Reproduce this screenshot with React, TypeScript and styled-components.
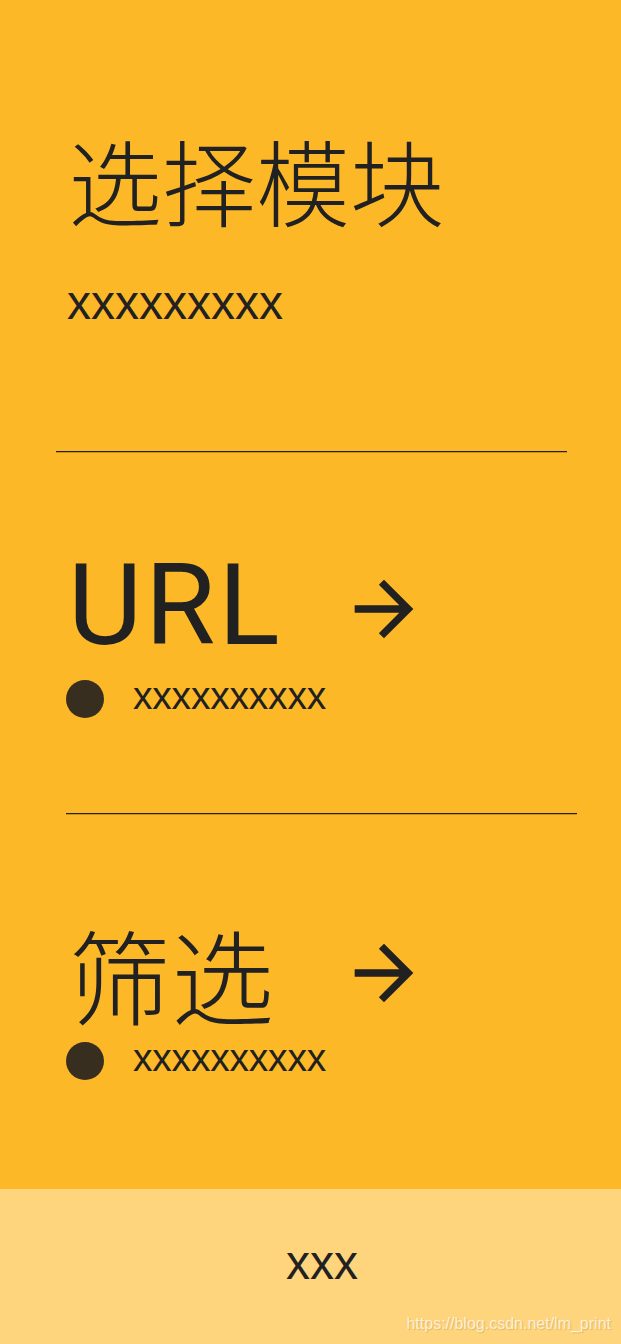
import React from "react";
import styled, { createGlobalStyle } from "styled-components";

const GlobalStyle = createGlobalStyle`
  html, body {
    margin: 0;
    padding: 0;
    background: #fdb827;
  }
  * { box-sizing: border-box; }
`;

const Page = styled.div`
  width: 621px;
  height: 1344px;
  display: flex;
  flex-direction: column;
  background: #fdb827;
  color: #212121;
  font-family: "Liberation Sans", "Noto Sans CJK SC", sans-serif;
  overflow: hidden;
`;

const Main = styled.main`
  flex: 1;
  display: flex;
  flex-direction: column;
`;

const Header = styled.header`
  padding: 132px 0 0 68px;
`;

const Title = styled.h1`
  margin: 0;
  font-family: "Noto Sans CJK SC", sans-serif;
  font-weight: 300;
  font-size: 94px;
  line-height: 1;
`;

const Subtitle = styled.p`
  margin: 53px 0 0 -1px;
  font-family: "Liberation Sans", Arial, sans-serif;
  font-size: 48px;
  line-height: 1;
`;

const Divider = styled.hr<{ $left: number; $top: number }>`
  margin: ${(p) => p.$top}px 0 0 ${(p) => p.$left}px;
  width: 511px;
  height: 1px;
  border: 0;
  background: #24201c;
  box-shadow: 0 0.5px 0 rgba(36, 32, 28, 0.5);
`;

const Section = styled.section<{ $top: number }>`
  padding: ${(p) => p.$top}px 0 0 68px;
`;

const TitleRow = styled.div`
  display: grid;
  grid-template-columns: 272px 88px;
  align-items: center;
`;

const BigLabel = styled.h2<{ $cjk?: boolean }>`
  margin: 0;
  font-weight: ${(p) => (p.$cjk ? 300 : 400)};
  font-family: ${(p) =>
    p.$cjk ? `"Noto Sans CJK SC", sans-serif` : `Roboto, "Liberation Sans", sans-serif`};
  font-size: ${(p) => (p.$cjk ? 103 : 114)}px;
  letter-spacing: ${(p) => (p.$cjk ? 0 : 3)}px;
  line-height: 1;
`;

const ArrowBox = styled.span<{ $shift: number }>`
  display: block;
  width: 88px;
  height: 88px;
  transform: translateY(${(p) => p.$shift}px);
`;

const BulletRow = styled.div<{ $top: number }>`
  display: flex;
  align-items: flex-start;
  gap: 29px;
  margin: ${(p) => p.$top}px 0 0 -2px;
`;

const Dot = styled.span`
  width: 38px;
  height: 38px;
  margin-top: 4px;
  border-radius: 50%;
  background: #382e20;
  flex: none;
`;

const BulletText = styled.span`
  font-family: "Liberation Sans", Arial, sans-serif;
  font-size: 39px;
  line-height: 1;
  letter-spacing: -0.2px;
`;

const Footer = styled.footer`
  position: relative;
  height: 155px;
  padding: 50px 0 0 23px;
  background: #fed47d;
  display: flex;
  align-items: flex-start;
  justify-content: center;
`;

const FooterText = styled.span`
  font-family: "Liberation Sans", Arial, sans-serif;
  font-size: 48px;
  line-height: 1;
`;

const Watermark = styled.span`
  position: absolute;
  right: 10px;
  bottom: 11px;
  font-family: "Liberation Sans", Arial, sans-serif;
  font-size: 16px;
  color: rgba(255, 255, 255, 0.72);
  text-shadow: 1px 1px 1px rgba(140, 90, 0, 0.22);
`;

const Arrow = ({ shift }: { shift: number }) => (
  <ArrowBox $shift={shift}>
    <svg width="88" height="88" viewBox="0 0 24 24" aria-hidden="true">
      <path
        fill="#212121"
        d="M12 4l-1.41 1.41L16.17 11H4v2h12.17l-5.58 5.59L12 20l8-8z"
      />
    </svg>
  </ArrowBox>
);

export default function App() {
  return (
    <>
      <GlobalStyle />
      <Page>
        <Main>
          <Header>
            <Title>选择模块</Title>
            <Subtitle>xxxxxxxxx</Subtitle>
          </Header>
          <Divider $left={56} $top={124} />
          <Section $top={96}>
            <TitleRow>
              <BigLabel>URL</BigLabel>
              <Arrow shift={4} />
            </TitleRow>
            <BulletRow $top={14}>
              <Dot />
              <BulletText>xxxxxxxxxx</BulletText>
            </BulletRow>
          </Section>
          <Divider $left={66} $top={95} />
          <Section $top={108}>
            <TitleRow>
              <BigLabel $cjk>筛选</BigLabel>
              <Arrow shift={-1} />
            </TitleRow>
            <BulletRow $top={13}>
              <Dot />
              <BulletText>xxxxxxxxxx</BulletText>
            </BulletRow>
          </Section>
        </Main>
        <Footer>
          <FooterText>xxx</FooterText>
          <Watermark>https://blog.csdn.net/lm_print</Watermark>
        </Footer>
      </Page>
    </>
  );
}
